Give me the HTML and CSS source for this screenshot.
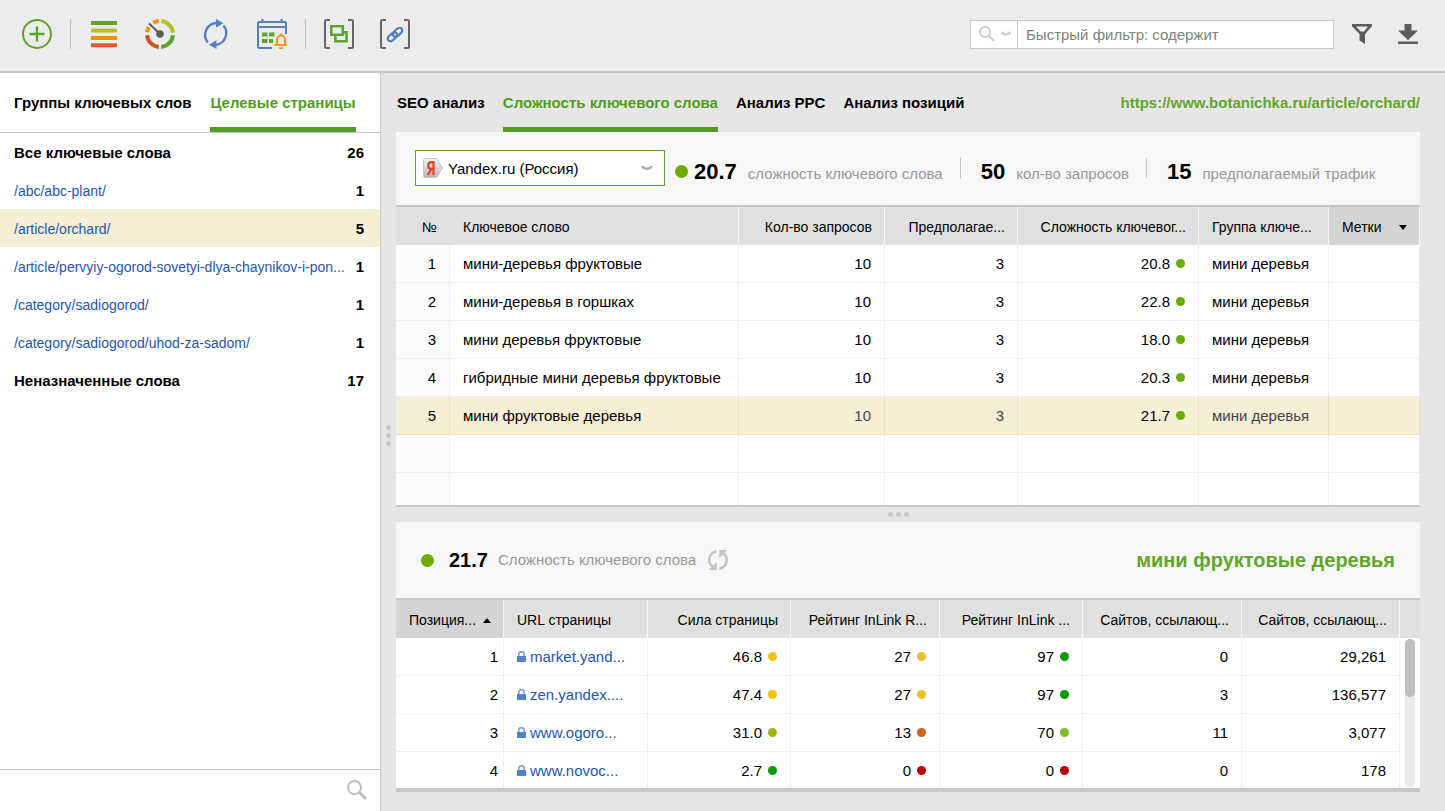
FILE: index.html
```html
<!DOCTYPE html>
<html lang="ru">
<head>
<meta charset="utf-8">
<title>Целевые страницы</title>
<meta name="viewport" content="width=device-width, initial-scale=1">
<link rel="stylesheet" href="styles.css">
</head>
<body>
<div class="app">
  <header class="toolbar">
    <button class="tool" type="button" aria-label="Добавить">
      <svg width="30" height="30" viewBox="0 0 30 30" fill="none" stroke="#5da42c" stroke-width="2"><circle cx="15" cy="15" r="14"/><path d="M15 7.500v15M7.500 15h15" stroke-width="2.400"/></svg>
    </button>
    <span class="rule"></span>
    <button class="tool" type="button" aria-label="Список">
      <svg width="30" height="30" viewBox="0 0 30 30"><path fill="#5da42c" d="M2 2h26v4H2z"/><path fill="#b9bd2f" d="M2 9.500h26v4H2z"/><path fill="#f08c1a" d="M2 17h26v4H2z"/><path fill="#e0573a" d="M2 24.300h26v4H2z"/></svg>
    </button>
    <button class="tool tool-wide" type="button" aria-label="Показатели">
      <svg width="30" height="30" viewBox="0 0 30 30" fill="none" stroke-width="4"><path stroke="#b9bd2f" d="M16.200 2.050A13 13 0 0 1 27.950 13.800"/><path stroke="#5da42c" d="M27.950 16.200A13 13 0 0 1 16.200 27.950"/><path stroke="#cc5520" d="M13.800 27.950A13 13 0 0 1 2.050 16.200"/><path stroke="#f08c1a" d="M2.100 13.300A13 13 0 0 1 4 8.200M8.400 3.800A13 13 0 0 1 13.800 2.050"/><path stroke="#5c5c5c" stroke-width="2" d="M4 4.500 15 15"/><circle cx="15" cy="15" r="3.800" fill="#5c5c5c"/></svg>
    </button>
    <button class="tool tool-wide" type="button" aria-label="Обновить">
      <svg width="30" height="30" viewBox="0 0 30 30" fill="none" stroke="#5580bd" stroke-width="2.400"><path d="M6.800 23.500A12 12 0 0 1 15 4M22.500 6.500A12 12 0 0 1 15 26"/><path fill="#5580bd" stroke="none" d="M15 0l7.500 4.200L15 8.500zM15.500 21.300V30L8 25.700z"/></svg>
    </button>
    <button class="tool tool-wide" type="button" aria-label="Расписание">
      <svg width="30" height="30" viewBox="0 0 30 30" fill="none"><path stroke="#5580bd" stroke-width="2" d="M15 29H2.500Q1 29 1 27.500V4.500Q1 3 2.500 3H27.500Q29 3 29 4.500V15M1 8h28M5.500 0v4M24.500 0v4"/><path fill="#5da42c" d="M5 13.500h5.500v4H5zM12 13.500h5.500v4H12zM5 20h5.500v4H5zM12 20h4v4h-4z"/><path stroke="#f7931e" stroke-width="2" d="M20 26v-5.500a4 4 0 0 1 8 0V26M17.500 26h12.500M24 14.500v2M22 29.200h4"/></svg>
    </button>
    <span class="rule"></span>
    <button class="tool" type="button" aria-label="Группы">
      <svg width="30" height="30" viewBox="0 0 30 30" fill="none" stroke="#666" stroke-width="2"><path d="M6 1H2.500Q1 1 1 2.500v25Q1 29 2.500 29H6M24 1h3.500Q29 1 29 2.500v25q0 1.500-1.500 1.500H24"/><path stroke="#5da42c" stroke-width="2.600" d="M7.300 7.300h11.500v8.500H7.300zM19.500 13.300h3v9H11.300V16.500"/></svg>
    </button>
    <button class="tool tool-wide" type="button" aria-label="Ссылки">
      <svg width="30" height="30" viewBox="0 0 30 30" fill="none" stroke="#666" stroke-width="2"><path d="M6 1H2.500Q1 1 1 2.500v25Q1 29 2.500 29H6M24 1h3.500Q29 1 29 2.500v25q0 1.500-1.500 1.500H24"/><path stroke="#5580bd" stroke-width="2.200" stroke-linecap="round" d="M14 17.500q-2.500-3 .5-5.500l3-2.500q2.500-1.500 4 0t0 4L18.500 16.500q-1 1-2.500.8M16 13.500q2.500 3-.5 5.500l-3 2.500q-2.500 1.500-4 0t0-4l3-2.700q1-1 2.300-.8"/></svg>
    </button>

    <form class="quick" role="search">
      <button class="quick-mode" type="button" aria-label="Режим фильтра">
        <svg width="16" height="16" viewBox="0 0 16 16" fill="none" stroke="#ccc" stroke-width="2"><circle cx="6" cy="6" r="5"/><path d="M9.600 9.600 15 15"/></svg>
        <svg width="10" height="6" viewBox="0 0 10 6" fill="none" stroke="#ccc" stroke-width="2.400"><path d="M.5 1 Q2 3.300 5 3.500 8 3.300 9.500 1"/></svg>
      </button>
      <input class="quick-input" type="text" aria-label="Быстрый фильтр" placeholder="Быстрый фильтр: содержит">
    </form>
    <button class="action" type="button" aria-label="Фильтр">
      <svg width="20" height="20" viewBox="0 0 20 20"><path fill="#5c5c5c" fill-rule="evenodd" d="M0 0h20v2.200L13 10v10l-5.500-3.500V10L0 2.200zM4 2.500l4.500 5h3.500l4-5z"/></svg>
    </button>
    <button class="action action-last" type="button" aria-label="Скачать">
      <svg width="20" height="20" viewBox="0 0 20 20"><path fill="#5c5c5c" d="M6.500 0h7v6.500H20L10 16 0 6.500h6.500zM0 17.500h20V20H0z"/></svg>
    </button>
  </header>

  <div class="body">
    <aside class="sidebar">
      <nav class="tabs side-tabs">
        <button class="tab" type="button">Группы ключевых слов</button>
        <button class="tab active" type="button">Целевые страницы</button>
      </nav>
      <ul class="pages">
        <li class="page strong"><span>Все ключевые слова</span><b>26</b></li>
        <li class="page"><a href="#">/abc/abc-plant/</a><b>1</b></li>
        <li class="page selected"><a href="#">/article/orchard/</a><b>5</b></li>
        <li class="page"><a href="#">/article/pervyiy-ogorod-sovetyi-dlya-chaynikov-i-pon...</a><b>1</b></li>
        <li class="page"><a href="#">/category/sadiogorod/</a><b>1</b></li>
        <li class="page"><a href="#">/category/sadiogorod/uhod-za-sadom/</a><b>1</b></li>
        <li class="page strong"><span>Неназначенные слова</span><b>17</b></li>
      </ul>
      <div class="side-foot">
        <button class="side-search" type="button" aria-label="Поиск">
          <svg width="20" height="20" viewBox="0 0 20 20" fill="none" stroke="#bdbdbd" stroke-width="2"><circle cx="7.500" cy="7.500" r="6.500"/><path stroke-width="2.600" d="M12.500 12.500 19 19"/></svg>
        </button>
      </div>
    </aside>
    <div class="grip grip-v"><i></i><i></i><i></i></div>

    <main class="content">
      <nav class="tabs main-tabs">
        <button class="tab" type="button">SEO анализ</button>
        <button class="tab active" type="button">Сложность ключевого слова</button>
        <button class="tab" type="button">Анализ PPC</button>
        <button class="tab" type="button">Анализ позиций</button>
        <a class="target" href="#">https://www.botanichka.ru/article/orchard/</a>
      </nav>

      <section class="panel panel-top">
        <div class="panel-head">
          <div class="engine">
            <svg class="engine-logo" width="20" height="20" viewBox="0 0 20 20"><defs><linearGradient id="g" x2="0" y2="1"><stop stop-color="#f4f4f4"/><stop offset="1" stop-color="#b5b5b5"/></linearGradient></defs><path fill="url(#g)" stroke="#c4c4c4" d="M2.500.5h11l6 9.500-6 9.500h-11q-2 0-2-2v-15q0-2 2-2z"/><path fill="none" stroke="#e8392b" stroke-width="2.200" d="M10.500 17V4.100H8.300Q5.300 4.100 5.300 7.500T8.300 11h2.200M8.300 11 4.800 17"/></svg>
            <select class="engine-select" aria-label="Поисковая система"><option>Yandex.ru (Россия)</option></select>
            <svg class="engine-arrow" width="12" height="6" viewBox="0 0 12 6" fill="none" stroke="#aaa" stroke-width="2.400"><path d="M1 1Q2.500 3.500 6 3.700 9.500 3.500 11 1"/></svg>
          </div>
          <div class="stats">
            <span class="dot dot-big green"></span>
            <span class="stat"><b>20.7</b>сложность ключевого слова</span>
            <span class="stat-rule"></span>
            <span class="stat"><b>50</b>кол-во запросов</span>
            <span class="stat-rule"></span>
            <span class="stat"><b>15</b>предполагаемый трафик</span>
          </div>
        </div>
        <div class="table-box">
          <table class="grid">
            <colgroup><col class="w54"><col><col class="w146"><col class="w133"><col class="w181"><col class="w130"><col class="w91"></colgroup>
            <thead><tr><th class="num plain">№</th><th>Ключевое слово</th><th class="num">Кол-во запросов</th><th class="num">Предполагае...</th><th class="num">Сложность ключевог...</th><th>Группа ключе...</th><th class="sorted"><span class="sort">Метки<svg width="8" height="5" viewBox="0 0 8 5"><path d="M0 0h8L4 5z"/></svg></span></th></tr></thead>
            <tbody>
              <tr><td class="num idx">1</td><td>мини-деревья фруктовые</td><td class="num">10</td><td class="num">3</td><td class="num">20.8<span class="dot green"></span></td><td>мини деревья</td><td></td></tr>
              <tr><td class="num idx">2</td><td>мини-деревья в горшках</td><td class="num">10</td><td class="num">3</td><td class="num">22.8<span class="dot green"></span></td><td>мини деревья</td><td></td></tr>
              <tr><td class="num idx">3</td><td>мини деревья фруктовые</td><td class="num">10</td><td class="num">3</td><td class="num">18.0<span class="dot green"></span></td><td>мини деревья</td><td></td></tr>
              <tr><td class="num idx">4</td><td>гибридные мини деревья фруктовые</td><td class="num">10</td><td class="num">3</td><td class="num">20.3<span class="dot green"></span></td><td>мини деревья</td><td></td></tr>
              <tr class="current"><td class="num idx">5</td><td>мини фруктовые деревья</td><td class="num dim">10</td><td class="num dim">3</td><td class="num">21.7<span class="dot green"></span></td><td class="dim">мини деревья</td><td></td></tr>
              <tr><td class="idx"></td><td></td><td></td><td></td><td></td><td></td><td></td></tr>
              <tr><td class="idx"></td><td></td><td></td><td></td><td></td><td></td><td></td></tr>
            </tbody>
          </table>
        </div>
      </section>

      <div class="grip grip-h"><i></i><i></i><i></i></div>

      <section class="panel panel-bottom">
        <div class="panel-head detail-head">
          <span class="dot dot-big green"></span>
          <b class="score">21.7</b>
          <span class="score-label">Сложность ключевого слова</span>
          <button class="reload" type="button" aria-label="Пересчитать">
            <svg width="20" height="20" viewBox="0 0 20 20"><path fill="none" stroke="#c4c4c4" stroke-width="2.600" d="M8.500 1.300C3.500 2.500 1.300 6 1.300 10c0 3 1.500 5.500 4 7M11.500 18.700c5-1.200 7.200-4.700 7.200-8.700 0-3-1.500-5.500-4-7"/><path fill="#c4c4c4" d="M8.700 12v8H.5zM11.300 8V0h8.200z"/></svg>
          </button>
          <h2 class="keyword">мини фруктовые деревья</h2>
        </div>
        <div class="table-box">
          <table class="grid">
            <colgroup><col class="w108"><col><col class="w143"><col class="w149"><col class="w143"><col class="w159"><col class="w158"><col class="w20"></colgroup>
            <thead><tr><th class="sorted"><span class="sort">Позиция...<svg width="8" height="5" viewBox="0 0 8 5"><path d="M0 5h8L4 0z"/></svg></span></th><th>URL страницы</th><th class="num">Сила страницы</th><th class="num">Рейтинг InLink R...</th><th class="num">Рейтинг InLink ...</th><th class="num">Сайтов, ссылающ...</th><th class="num">Сайтов, ссылающ...</th><th class="gutter"></th></tr></thead>
            <tbody>
              <tr><td class="num pos">1</td><td><svg class="lock" width="9" height="11" viewBox="0 0 9 11"><path fill="none" stroke="#7ba2dc" stroke-width="1.500" d="M1.800 5V3.400a2.700 2.700 0 0 1 5.400 0V5"/><path fill="#4f83d1" d="M0 5h9v6H0z"/></svg><a href="#">market.yand...</a></td><td class="num">46.8<span class="dot yellow"></span></td><td class="num">27<span class="dot sand"></span></td><td class="num">97<span class="dot deep"></span></td><td class="num">0</td><td class="num">29,261</td><td class="gutter"></td></tr>
              <tr><td class="num pos">2</td><td><svg class="lock" width="9" height="11" viewBox="0 0 9 11"><path fill="none" stroke="#7ba2dc" stroke-width="1.500" d="M1.800 5V3.400a2.700 2.700 0 0 1 5.400 0V5"/><path fill="#4f83d1" d="M0 5h9v6H0z"/></svg><a href="#">zen.yandex....</a></td><td class="num">47.4<span class="dot yellow"></span></td><td class="num">27<span class="dot sand"></span></td><td class="num">97<span class="dot deep"></span></td><td class="num">3</td><td class="num">136,577</td><td class="gutter"></td></tr>
              <tr><td class="num pos">3</td><td><svg class="lock" width="9" height="11" viewBox="0 0 9 11"><path fill="none" stroke="#7ba2dc" stroke-width="1.500" d="M1.800 5V3.400a2.700 2.700 0 0 1 5.400 0V5"/><path fill="#4f83d1" d="M0 5h9v6H0z"/></svg><a href="#">www.ogoro...</a></td><td class="num">31.0<span class="dot olive"></span></td><td class="num">13<span class="dot rust"></span></td><td class="num">70<span class="dot lime"></span></td><td class="num">11</td><td class="num">3,077</td><td class="gutter"></td></tr>
              <tr><td class="num pos">4</td><td><svg class="lock" width="9" height="11" viewBox="0 0 9 11"><path fill="none" stroke="#7ba2dc" stroke-width="1.500" d="M1.800 5V3.400a2.700 2.700 0 0 1 5.400 0V5"/><path fill="#4f83d1" d="M0 5h9v6H0z"/></svg><a href="#">www.novoc...</a></td><td class="num">2.7<span class="dot deep"></span></td><td class="num">0<span class="dot red"></span></td><td class="num">0<span class="dot red"></span></td><td class="num">0</td><td class="num">178</td><td class="gutter"></td></tr>
            </tbody>
          </table>
          <div class="scroll"><div class="thumb"></div></div>
        </div>
      </section>
    </main>
  </div>
</div>
</body>
</html>
```

FILE: styles.css
```css
* { box-sizing: border-box; }
body { margin: 0; font: 15px/20px "Liberation Sans", Arial, sans-serif; color: #000; }
button { border: 0; padding: 0; background: none; font: inherit; color: inherit; cursor: pointer; }
svg { display: block; }
a { color: #1f56ad; text-decoration: none; }

.app { display: flex; flex-direction: column; height: 100vh; background: #e6e6e6; overflow: hidden; }

.toolbar { display: flex; align-items: center; flex: none; padding: 19px 27px 22px 22px; background: #ececec; border-bottom: 2px solid #c6c6c6; }
.tool { flex: none; width: 30px; height: 30px; }
.tool-wide { margin-left: 26px; }
.rule { flex: none; width: 1px; height: 30px; margin: 0 18px; background: #bfbfbf; }
.quick { display: flex; width: 364px; height: 29px; margin: 0 0 0 auto; border: 1px solid #c8c8c8; background: #fff; }
.quick-mode { display: flex; align-items: center; gap: 6px; flex: none; width: 47px; padding-left: 8px; border-right: 1px solid #c8c8c8; }
.quick-input { flex: 1; min-width: 0; border: 0; outline: 0; padding: 2px 8px 0; background: none; font: inherit; color: #000; }
.quick-input::placeholder { color: #808080; opacity: 1; }
.action { flex: none; width: 20px; height: 20px; margin-left: 18px; }
.action-last { margin-left: 26px; }

.body { display: flex; flex: 1; min-height: 0; }
.sidebar { display: flex; flex-direction: column; flex: none; width: 381px; background: #fff; border-right: 1px solid #c8c8c8; }
.tabs { display: flex; gap: 19px; flex: none; }
.side-tabs { padding: 0 14px; border-bottom: 1px solid #c8c8c8; }
.main-tabs { gap: 18px; padding-left: 1px; }
.tab { padding: 20px 0 14px; border-bottom: 5px solid transparent; font-weight: bold; white-space: nowrap; }
.tab.active { color: #519d1c; border-color: #519d1c; }
.target { margin: 20px 0 0 auto; font-weight: bold; color: #62a52d; }

.pages { flex: 1; margin: 0; padding: 0; list-style: none; overflow: hidden; }
.page { display: flex; justify-content: space-between; height: 38px; padding: 10px 16px 8px 14px; white-space: nowrap; }
.page a { font-size: 14px; }
.page.strong { font-weight: bold; }
.page.selected { background: #f6eed5; }
.side-foot { display: flex; justify-content: flex-end; flex: none; padding: 10px 13px 11px; border-top: 1px solid #c8c8c8; }
.side-search { width: 20px; height: 20px; }

.grip { display: flex; align-items: center; justify-content: center; gap: 3px; flex: none; }
.grip i { width: 5px; height: 5px; border-radius: 50%; background: #c8c8c8; }
.grip-v { flex-direction: column; width: 15px; padding-bottom: 13px; }
.grip-h { height: 15px; padding-right: 19px; }

.content { display: flex; flex-direction: column; flex: 1; min-width: 0; padding: 0 25px 19px 0; }
.panel { display: flex; flex-direction: column; min-height: 0; background: #fff; }
.panel-top { flex: 373 1 0; border-bottom: 2px solid #c8c8c8; }
.panel-bottom { flex: 266 1 0; border-bottom: 4px solid #c8c8c8; }
.panel-head { display: flex; align-items: center; flex: none; padding: 18px 19px 19px; background: #f7f7f7; border-bottom: 2px solid #c6c6c6; }

.engine { position: relative; width: 250px; }
.engine-select { appearance: none; display: block; width: 100%; height: 36px; padding: 2px 32px 0; border: 1px solid #5da42c; border-radius: 0; background: #fff; font: inherit; color: #000; }
.engine-logo { position: absolute; left: 8px; top: 8px; }
.engine-arrow { position: absolute; right: 12px; top: 15px; }

.stats { display: flex; align-items: center; margin-left: 10px; white-space: nowrap; }
.stat { padding-top: 10px; color: #999; }
.stat b { margin: 0 11px 0 6px; font-size: 22px; color: #000; }
.stat-rule { width: 1px; height: 20px; margin: 0 14px 0 17px; background: #c4c4c4; }

.dot { display: inline-block; width: 9px; height: 9px; margin-left: 6px; border-radius: 50%; vertical-align: 1px; }
.dot-big { flex: none; width: 13px; height: 13px; margin: 0; }
.green { background: #6aab04; }
.yellow { background: #f0c405; }
.sand { background: #e8c02c; }
.deep { background: #0e9a06; }
.olive { background: #a3b30f; }
.rust { background: #d2621a; }
.lime { background: #7bc02a; }
.red { background: #b40404; }
.stats .dot-big { margin-top: 6px; }

.detail-head { height: 78px; padding: 0 25px; }
.score { margin: 0 10px 0 15px; font-size: 20px; }
.score-label { color: #999; }
.reload { margin-left: 12px; }
.keyword { margin: 0 0 0 auto; font-size: 20px; color: #62a52d; }

.table-box { position: relative; flex: 1; min-height: 0; overflow: hidden; }
.grid { width: 100%; table-layout: fixed; border-collapse: separate; border-spacing: 0; }
.grid th, .grid td { height: 38px; padding: 0 13px 0 13px; text-align: left; font-weight: normal; white-space: nowrap; }
.grid th { padding-top: 2px; background: #e0e0e0; border-right: 1px solid #f7f7f7; padding-right: 12px; font-size: 14px; }
.grid td { border-right: 1px solid #efefef; border-bottom: 1px solid #efefef; }
.grid .num { text-align: right; }
.grid th.plain { border-right-color: #e0e0e0; }
.grid th.sorted { background: #d4d4d4; }
.grid td.idx { background: #fcfcfc; }
.grid td.pos { padding-right: 5px; }
.grid .gutter { padding: 0; border: 0; }
.grid .current td { background: #f6eed5; border-color: #ebe2c0; }
.grid .current .dim { color: #444; }
.sort { display: flex; align-items: center; justify-content: space-between; }
.lock { display: inline-block; margin-right: 4px; }
.w20 { width: 20px; }
.w54 { width: 54px; }
.w91 { width: 91px; }
.w108 { width: 108px; }
.w130 { width: 130px; }
.w133 { width: 133px; }
.w143 { width: 143px; }
.w146 { width: 146px; }
.w149 { width: 149px; }
.w158 { width: 158px; }
.w159 { width: 159px; }
.w181 { width: 181px; }

.scroll { position: absolute; top: 39px; right: 5px; bottom: 1px; width: 10px; border-radius: 5px; background: #ebebeb; }
.thumb { height: 39%; border-radius: 5px; background: #bfbfbf; }
```
